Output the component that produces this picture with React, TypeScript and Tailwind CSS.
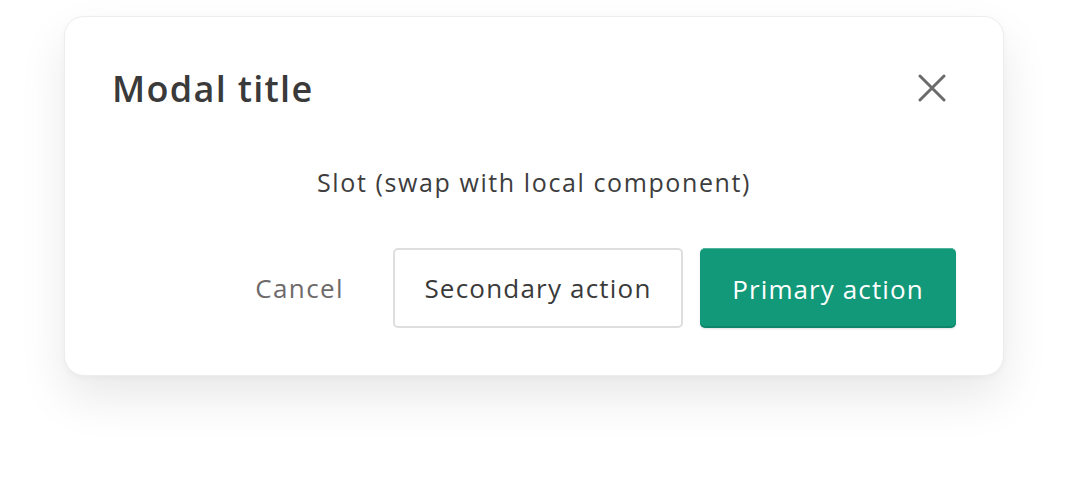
import React from "react";

export default function App() {
  return (
    <div
      className="w-[1068px] h-[488px] bg-white pt-[16px] pl-[64px]"
      style={{ fontFamily: "'Open Sans', Lato, sans-serif" }}
    >
      <div className="w-[940px] h-[360px] bg-white rounded-[20px] border border-[#ededed] shadow-[0_22px_48px_rgba(0,0,0,0.09),0_2px_6px_rgba(0,0,0,0.03)] px-[47px] pt-[47px] pb-[47px] flex flex-col">
        <div className="h-[48px] flex items-center justify-between">
          <h1 className="text-[36px] font-semibold text-[#3a3a3a] leading-none tracking-[1.3px] pt-[1px]">
            Modal title
          </h1>
          <button className="w-[48px] h-[48px] flex items-center justify-center">
            <svg width="28" height="28" viewBox="0 0 28 28" fill="none">
              <path
                d="M2 2L26 26M26 2L2 26"
                stroke="#6b6b6b"
                strokeWidth="3"
                strokeLinecap="round"
              />
            </svg>
          </button>
        </div>
        <div className="mt-[54px] h-[32px] flex items-center justify-center text-[25px] text-[#3d3d3d] leading-none tracking-[1.6px]">
          Slot (swap with local component)
        </div>
        <div className="mt-[50px] flex justify-end items-center gap-[17px]">
          <button className="h-[80px] px-[32px] text-[26px] text-[#6e6a6a] leading-none tracking-[1.4px]">
            Cancel
          </button>
          <button className="h-[80px] w-[290px] rounded-[5px] border-2 border-[#dedede] bg-white text-[26px] text-[#3a3a3a] leading-none tracking-[1.2px]">
            Secondary action
          </button>
          <button className="h-[80px] w-[256px] rounded-[5px] bg-[#11997a] border-t border-t-[#4fb499] shadow-[inset_0_-2px_0_rgba(0,0,0,0.12),0_1px_2px_rgba(0,0,0,0.12)] text-[26px] text-white leading-none tracking-[1.1px]">
            Primary action
          </button>
        </div>
      </div>
    </div>
  );
}
